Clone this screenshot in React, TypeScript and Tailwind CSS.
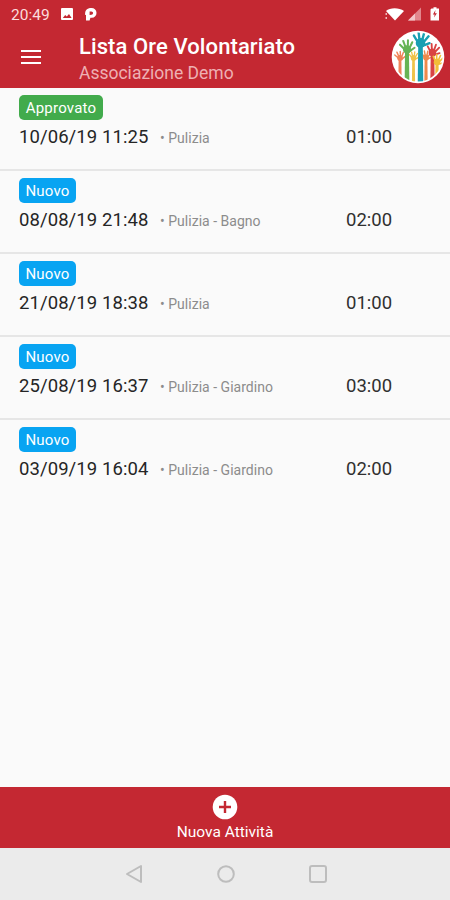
interface Activity {
  date: string
  category: string
  hours: string
  approved: boolean
}

interface HandProps {
  x: number
  y: number
  size: number
  color: string
  tilt?: number
}

const activities: Activity[] = [
  { date: '10/06/19 11:25', category: 'Pulizia', hours: '01:00', approved: true },
  { date: '08/08/19 21:48', category: 'Pulizia - Bagno', hours: '02:00', approved: false },
  { date: '21/08/19 18:38', category: 'Pulizia', hours: '01:00', approved: false },
  { date: '25/08/19 16:37', category: 'Pulizia - Giardino', hours: '03:00', approved: false },
  { date: '03/09/19 16:04', category: 'Pulizia - Giardino', hours: '02:00', approved: false },
]

// Raised hand, (x, y) is the centre of the palm
function Hand({ x, y, size, color, tilt = 0 }: HandProps) {
  return (
    <g fill={color} stroke={color} strokeLinecap="round">
      <path stroke="none" d={`M${x - size * 1.6} ${y}L${x - size * 2} 54H${x + size * 2}L${x + size * 1.6} ${y}Z`} />
      <g transform={`translate(${x} ${y}) rotate(${tilt}) scale(${size})`}>
        <ellipse stroke="none" rx="3.4" ry="3.6" />
        <path fill="none" strokeWidth="1.7" d="M-2.2 -.6L-5.4 -4.6M-1 -2L-2.4 -7.4M.9 -2L1.6 -7.6M2.2 -1L5 -5.6M1.8 1.8L6.4 -.8" />
      </g>
    </g>
  )
}

function Logo() {
  return (
    <svg width="54" height="54" viewBox="0 0 54 54">
      <defs>
        <clipPath id="logo-clip">
          <circle cx="27" cy="27" r="24.5" />
        </clipPath>
      </defs>
      <circle cx="27" cy="27" r="26.3" fill="#fff" />
      <g clipPath="url(#logo-clip)">
        <Hand x={9} y={28} size={0.85} color="#f08358" tilt={-10} />
        <Hand x={22.5} y={28} size={0.8} color="#f0c34a" />
        <Hand x={35} y={27.5} size={0.85} color="#ee8a4c" tilt={4} />
        <Hand x={16} y={19.5} size={1.2} color="#66b455" tilt={-6} />
        <Hand x={41.5} y={22.5} size={1.1} color="#d94342" tilt={12} />
        <Hand x={46} y={32} size={0.95} color="#f2bd38" tilt={16} />
        <Hand x={29.5} y={13} size={1.4} color="#199fb2" tilt={8} />
      </g>
    </svg>
  )
}

function StatusBar() {
  return (
    <div className="flex h-7 items-center justify-between pl-[11px] pr-[9px] text-white">
      <div className="flex items-center">
        <span className="w-[49px] pt-px text-[15.5px] leading-7 text-[#fbdcdd]">20:49</span>
        <svg width="14" height="14" viewBox="0 0 14 14">
          <rect x="1" y="1" width="12" height="12" rx="1" fill="#fff" />
          <path d="M2.8 11L5.2 8L6.8 9.6L9 7L11.6 11Z" fill="#c42832" />
        </svg>
        <svg width="14" height="14" viewBox="0 0 14 14" className="ml-[10px]">
          <path d="M1.2 8C.6 3.5 3 1 7.4 1A4.9 4.9 0 0 1 7.8 10.8H6.4L5.6 13.4H2V8Z" fill="#fff" />
          <path d="M5.6 8V4.4H7.4A1.7 1.7 0 0 1 7.4 7.8Z" fill="#c42832" />
        </svg>
      </div>
      <svg width="56" height="16" viewBox="1 .5 56 16">
        <path d="M2 5.6C6 1.8 15 1.8 20 5.6L11 15Z" fill="#fff" />
        <path d="M2.2 7.5V9.5M2.2 11.5V13.5" stroke="#fbdcdd" strokeWidth="1.2" />
        <path d="M37 2V15H24Z" fill="#e2868c" />
        <path d="M31 8V15H24Z" fill="#f3c5c8" />
        <path d="M47.5 3H49.5V1.7H52.5V3H55V15H46.5V4Z" fill="#fff" />
        <path d="M51.5 4.5L48.9 8.9H50.6L50.1 12L52.9 7.7H51Z" fill="#c42832" />
      </svg>
    </div>
  )
}

function ActivityRow({ activity }: { activity: Activity }) {
  return (
    <li className="h-[83px] border-b-2 border-[#e6e6e6] pl-[19px] pt-[7px] last:border-transparent">
      <span
        className={`flex h-[25px] items-center justify-center rounded-[5px] pt-px text-[15px] tracking-[0.2px] text-white ${
          activity.approved ? 'w-[84px] bg-[#42ab4c]' : 'w-[57px] bg-[#08a4f2]'
        }`}
      >
        {activity.approved ? 'Approvato' : 'Nuovo'}
      </span>
      <div className="flex items-baseline leading-[34px]">
        <span className="w-[141px] whitespace-nowrap text-[18.5px] tracking-[0.08px] text-[#252525]">{activity.date}</span>
        <span className="w-[186px] whitespace-nowrap text-[14px] tracking-[0.02px] text-[#8c8c8c]">• {activity.category}</span>
        <span className="text-[18.5px] text-[#303030]">{activity.hours}</span>
      </div>
    </li>
  )
}

export default function App() {
  return (
    <div className="flex h-[900px] w-[450px] flex-col overflow-hidden bg-[#fafafa] font-['Roboto',sans-serif]">
      <header className="h-[88px] shrink-0 bg-[#c42832]">
        <StatusBar />
        <div className="flex h-[58px] items-center pl-[21px] pr-[5px]">
          <svg width="20" height="16" viewBox="0 0 20 16" className="shrink-0">
            <path d="M0 2H20M0 8H20M0 14H20" stroke="#fff" strokeWidth="2" />
          </svg>
          <div className="ml-[38px] flex-1 pt-[5px]">
            <h1 className="text-[22px] font-medium leading-[27px] tracking-[0.1px] text-white">Lista Ore Volontariato</h1>
            <p className="text-[17.5px] leading-[26px] text-[#eeb0b3]">Associazione Demo</p>
          </div>
          <Logo />
        </div>
      </header>

      <ul className="flex-1">
        {activities.map(activity => (
          <ActivityRow key={activity.date} activity={activity} />
        ))}
      </ul>

      <button className="flex h-[61px] shrink-0 flex-col items-center bg-[#c42832] pt-[7px] text-white">
        <svg width="26" height="26" viewBox="0 0 26 26" className="shrink-0">
          <circle cx="13" cy="13" r="12.3" fill="#fff" />
          <path d="M13 7V19M7 13H19" stroke="#c42832" strokeWidth="2.4" />
        </svg>
        <span className="text-[15.5px] leading-[24px]">Nuova Attività</span>
      </button>

      <nav className="flex h-[52px] shrink-0 items-center justify-center gap-[74px] bg-[#ebebeb] pl-px">
        <svg width="18" height="20" viewBox="0 0 18 20" fill="none" stroke="#bdbdbd" strokeWidth="2" strokeLinejoin="round">
          <path d="M2 10L16 2V18Z" />
        </svg>
        <svg width="18" height="18" viewBox="0 0 18 18" fill="none" stroke="#bdbdbd" strokeWidth="2">
          <circle cx="9" cy="9" r="7.8" />
        </svg>
        <svg width="18" height="18" viewBox="0 0 18 18" fill="none" stroke="#bdbdbd" strokeWidth="2">
          <rect x="1" y="1" width="16" height="16" rx="2" />
        </svg>
      </nav>
    </div>
  )
}
